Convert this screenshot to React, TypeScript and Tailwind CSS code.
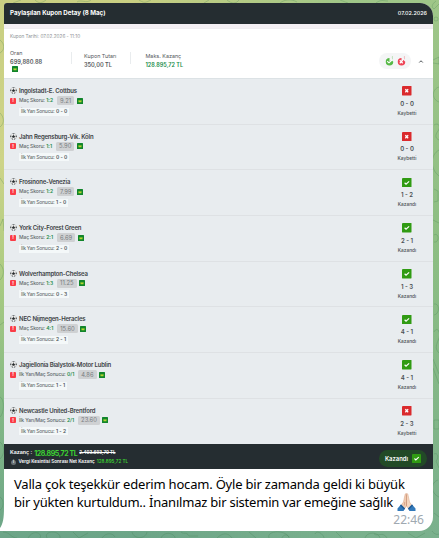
type Match = {
  teams: string;
  market: string;
  pick: string;
  odds: string;
  half: string;
  score: string;
  won: boolean;
};

const matches: Match[] = [
  { teams: "Ingolstadt-E. Cottbus", market: "Maç Skoru:", pick: "1:2", odds: "9.21", half: "0 - 0", score: "0 - 0", won: false },
  { teams: "Jahn Regensburg-Vik. Köln", market: "Maç Skoru:", pick: "1:1", odds: "5.90", half: "0 - 0", score: "0 - 0", won: false },
  { teams: "Frosinone-Venezia", market: "Maç Skoru:", pick: "1:2", odds: "7.99", half: "1 - 0", score: "1 - 2", won: true },
  { teams: "York City-Forest Green", market: "Maç Skoru:", pick: "2:1", odds: "6.69", half: "2 - 0", score: "2 - 1", won: true },
  { teams: "Wolverhampton-Chelsea", market: "Maç Skoru:", pick: "1:3", odds: "11.25", half: "0 - 3", score: "1 - 3", won: true },
  { teams: "NEC Nijmegen-Heracles", market: "Maç Skoru:", pick: "4:1", odds: "15.60", half: "2 - 1", score: "4 - 1", won: true },
  { teams: "Jagiellonia Bialystok-Motor Lublin", market: "İlk Yarı/Maç Sonucu:", pick: "0/1", odds: "4.86", half: "1 - 1", score: "4 - 1", won: true },
  { teams: "Newcastle United-Brentford", market: "İlk Yarı/Maç Sonucu:", pick: "2/1", odds: "23.60", half: "1 - 2", score: "2 - 3", won: false },
];

function Wallpaper() {
  return (
    <svg className="absolute inset-0 h-full w-full" viewBox="0 0 439 538" preserveAspectRatio="none">
      <defs>
        <linearGradient id="left" x1="0" y1="0" x2="0" y2="1">
          <stop offset="0" stopColor="#c9cf82" />
          <stop offset="0.3" stopColor="#ced488" />
          <stop offset="0.52" stopColor="#aacb82" />
          <stop offset="0.75" stopColor="#84b985" />
          <stop offset="1" stopColor="#6ca588" />
        </linearGradient>
        <linearGradient id="right" x1="0" y1="0" x2="0" y2="1">
          <stop offset="0" stopColor="#9fc688" />
          <stop offset="0.5" stopColor="#8bbd83" />
          <stop offset="1" stopColor="#7ab08d" />
        </linearGradient>
        <linearGradient id="fade" x1="0" y1="0" x2="1" y2="0">
          <stop offset="0.3" stopColor="#fff" stopOpacity="0" />
          <stop offset="0.8" stopColor="#fff" />
        </linearGradient>
        <mask id="mask">
          <rect width="439" height="538" fill="url(#fade)" />
        </mask>
      </defs>
      <rect width="439" height="538" fill="url(#left)" />
      <rect width="439" height="538" fill="url(#right)" mask="url(#mask)" />
      <g fill="none" stroke="#3f7d50" strokeOpacity="0.32" strokeWidth="0.8">
        <path d="M436 1c-4 3-5 6-2 8l5-5M434 19a2 2 0 1 0 4 0a2 2 0 1 0-4 0M433 60l6-3v7l-6-1M439 87c-7 2-8 12 0 15M434 125c5-3 7 2 4 6s-3 7 1 9M439 150c-9 5-9 19 0 26M434 189l4 2v10l-4 1M433 220l6 3M434 235c5-3 6 8 0 7M434 304c6-1 6 10 0 11M434 332c3-6 7 0 5 6s-5 10 0 15M433 359l6 15M433 368l6 16M434 420h5v9h-5z" />
        <path d="M434 454c4-2 5 4 2 7l3 7M438 480c-7 2-8 13 1 17M434 513l5 4M0 40c5 4 5 10 0 13M0 113c4 4 5 10 0 14M0 178l4 6M0 226l3-7 1 12M0 264c5 5 4 12 0 16M0 325l4-3M0 397c5 2 4 17 0 20M0 442c5 4 5 12 0 17M0 497c5 3 3 12 0 13" />
        <path d="M3 532c7 0 8 6 14 6M28 538c5-9 15-5 12 0M47 538c-4-8 14-8 13 0M73 532l6 6 9-5M102 538c4-6 11-5 13-1M132 532c2 8 14 7 15 0M161 538c4-8 14-4 14 0M181 532c4 3 5-1 8 4h9M217 538c5-5 11-6 15 0M249 532l7 6M269 538c-3-7 15-9 20-1M282 538c1-4 7-4 7 0M315 534c2-5 9 1 9 4M336 532l6 6M365 538c2-7 14-6 15 0M374 534c4 3 9-3 13 4M408 533l8 5 9-5M432 531c2 3 5 4 7 3" />
        <path d="M13 3l8-3M35 0c4 4 7 3 11 0M77 2c4-3 9 2 14-2M139 0c5 3 6 3 12 0M204 3l5-3M227 0c5 4 9 4 12 0M280 3c5-4 12-4 17-1M340 0l8 3M376 3c5-4 8-2 12-2" />
      </g>
      {/* bubble tail */}
      <path d="M4 508c0 10-1 16-4 20v3h8v-23z" fill="#fff" />
    </svg>
  );
}

function Football() {
  return (
    <svg className="h-[7px] w-[7px] shrink-0" viewBox="0 0 14 14">
      <circle cx="7" cy="7" r="6.2" fill="#f5f5f5" stroke="#9ba0a3" strokeWidth="0.7" />
      <path d="M7 4.2l3 2.2-1.1 3.3H5.1L4 6.4zM4.5 1h5L7 3zM.8 4.8l2.3.8-.8 3L.7 7.8zM13.2 4.8l-2.3.8.8 3 1.6-.8zM2.6 11.5l2.7-.4 1 2.2zM11.4 11.5l-2.7-.4-1 2.2z" fill="#25292b" />
    </svg>
  );
}

function Badge() {
  return (
    <svg className="h-[6px] w-[6px] shrink-0" viewBox="0 0 12 12">
      <rect width="12" height="12" rx="1" fill="#11852b" />
      <path d="M3 4l1.7 1.5L6 3.5l1.3 2L9 4v4.5H3z" fill="#b5d532" />
    </svg>
  );
}

function ResultIcon({ won, className }: { won: boolean; className: string }) {
  return (
    <svg className={className} viewBox="0 0 20 20">
      <rect width="20" height="20" rx="1" fill={won ? "#309b13" : "#da2a2d"} />
      <path
        d={won ? "M5.5 10l3 3 6.5-6" : "M7 7l6 6M13 7l-6 6"}
        fill="none"
        stroke="#fff"
        strokeWidth={won ? 2.5 : 2.8}
      />
    </svg>
  );
}

function StatusIcon({ won }: { won: boolean }) {
  const color = won ? "#57b947" : "#ee4355";
  return (
    <svg className="h-[10px] w-[9px]" viewBox="0 0 18 20">
      <path d="M9 4a7.5 7.5 0 1 0 7.5 7.5L13 8l-4 3z" fill={color} />
      <path d={won ? "M4.5 10.5l3.5 3.2L14 8" : "M5.5 8.5l6 6M11.5 8.5l-6 6"} fill="none" stroke="#fff" strokeWidth="2.2" />
      <path d="M13.5 2l1.5-1v5.5" fill="none" stroke={color} strokeWidth="1" strokeOpacity="0.6" />
    </svg>
  );
}

function PrayingHands() {
  return (
    <svg className="h-[18px] w-[19px] shrink-0" viewBox="0 0 38 36">
      <path d="M18.6 1c-2 .1-2.5 1.5-2.9 4L13 18l-5 7 6 8 5-7z" fill="#f4cfb4" stroke="#d7a183" strokeWidth="1" />
      <path d="M19.4 1c2 .1 2.5 1.5 2.9 4L25 18l5 7-6 8-5-7z" fill="#f7d9c1" stroke="#d7a183" strokeWidth="1" />
      <path d="M19 3v23M15.5 18l-1 7" fill="none" stroke="#bf8267" strokeWidth="1" />
      <path d="M8 23l8 8-3 5H1v-5zM30 23l-8 8 3 5h12v-5z" fill="#3279ba" />
      <path d="M8 23l8 8-2 2-8-8zM30 23l-8 8 2 2 8-8z" fill="#205b94" />
    </svg>
  );
}

function MatchRow({ match }: { match: Match }) {
  return (
    <div className="flex h-[45.7px] justify-between border-b border-[#dee1e4] pl-[6px] pr-[10px]">
      <div className="pt-[7px]">
        <div className="flex h-[9px] items-center gap-[2px] text-[6px] font-semibold tracking-[-0.18px] text-[#3c4245]">
          <Football />
          <span className="pt-px">{match.teams}</span>
        </div>
        <div className="mt-[0.5px] flex h-[10px] items-center">
          <span className="flex h-[6px] w-[6px] items-center justify-center rounded-[1px] bg-[#fa3c47] text-[5px] font-bold text-white">!</span>
          <span className="ml-[3px] text-[5px] font-medium tracking-[-0.13px] text-[#61676b]">{match.market}</span>
          <span className="ml-[1.5px] text-[5px] font-semibold text-[#248c4d]">{match.pick}</span>
          <span className="ml-[4px] mr-[2.5px] flex h-[9px] items-center rounded-[1.5px] bg-[#cfd1d3] px-[3px] text-[5.8px] text-[#777b7e]">{match.odds}</span>
          <Badge />
        </div>
        <div className="ml-[9px] mt-[2px] flex h-[8px] w-fit items-center bg-[#f4f8f9] px-[2px] text-[5px] font-medium text-[#697074]">
          <span className="tracking-[-0.22px]">İlk Yarı Sonucu:</span>
          <span className="ml-[1.5px] font-semibold text-[#53595d]">{match.half}</span>
        </div>
      </div>
      <div className="flex w-[32px] flex-col items-center pt-[7.3px] text-[#4a5053]">
        <ResultIcon won={match.won} className="h-[9.5px] w-[9.5px] shrink-0" />
        <span className="mt-[4px] h-[7px] text-[6px] font-semibold leading-[7px]">{match.score}</span>
        <span className="mt-[3px] text-[4.8px] font-medium leading-[7px]">{match.won ? "Kazandı" : "Kaybetti"}</span>
      </div>
    </div>
  );
}

export default function App() {
  return (
    <div className="relative h-[538px] w-[439px] overflow-hidden pl-[4px] pr-[6px] pt-[3px] font-[Inter,sans-serif] leading-none">
      <Wallpaper />
      <main className="relative h-[528px] overflow-hidden rounded-tl-[3px] rounded-tr-[13px] rounded-br-[14px] bg-white">
        <header className="flex h-[21px] items-center justify-between bg-[#252d31] pl-[6px] pr-[6px] text-white">
          <h1 className="text-[6.2px] font-bold">Paylaşılan Kupon Detay (8 Maç)</h1>
          <span className="text-[5.4px] font-medium">07.02.2026</span>
        </header>
        <div className="h-[4px] bg-[#f3eff3]" />
        <section className="h-[50px] border-t border-[#efedf0] bg-white pl-[6px] pr-[9px]">
          <p className="pt-[4px] text-[4.7px] leading-[7px] text-[#8c9093]">Kupon Tarihi: 07.02.2026 - 11:10</p>
          <div className="mt-[10px] flex">
            <div className="w-[61px] text-[#54585b]">
              <p className="text-[5.4px] leading-[7px]">Oran</p>
              <p className="mt-px text-[5.7px] font-semibold leading-[7px]">699,880.88</p>
              <div className="pl-[2px] pt-[0.5px]"><Badge /></div>
            </div>
            <div className="mt-[2px] h-[12px] w-px bg-[#e9ecee]" />
            <div className="ml-[12px] mt-[3px] w-[46px] text-[#54585b]">
              <p className="text-[5.4px] leading-[7px]">Kupon Tutarı</p>
              <p className="mt-[2px] text-[5.6px] font-semibold leading-[7px]">350,00 TL</p>
            </div>
            <div className="mt-[2px] h-[12px] w-px bg-[#e9ecee]" />
            <div className="ml-[14.5px] mt-[3px] text-[#54585b]">
              <p className="text-[5.4px] leading-[7px]">Maks. Kazanç</p>
              <p className="mt-[2px] text-[5.5px] font-semibold leading-[7px] text-[#168b48]">128.895,72 TL</p>
            </div>
            <div className="ml-auto mt-[3px] flex h-[16px] items-center">
              <div className="flex h-[16px] w-[32px] items-center justify-center gap-[3px] rounded-full bg-[#f4f5f6]">
                <StatusIcon won />
                <StatusIcon won={false} />
              </div>
              <svg className="ml-[7px] h-[5px] w-[6px]" viewBox="0 0 12 10">
                <path d="M2.5 7L6 3.5 9.5 7" fill="none" stroke="#4b5054" strokeWidth="2" />
              </svg>
            </div>
          </div>
        </section>
        <section className="h-[366px] overflow-hidden border-t border-[#dce2e5] bg-[#e8ecef]">
          {matches.map((match) => (
            <MatchRow key={match.teams} match={match} />
          ))}
        </section>
        <footer className="flex h-[25px] items-center justify-between bg-[#252d31] pl-[6px] pr-[3px] text-white">
          <div className="pt-[2px]">
            <p className="flex h-[9px] items-center gap-[2px] text-[5.3px] font-semibold">
              <span>Kazanç :</span>
              <span className="text-[7px] font-bold tracking-[-0.4px] text-[#3cd332]">128.895,72 TL</span>
              <span className="text-[4.5px] line-through">2.403.693,70 TL</span>
            </p>
            <p className="flex h-[9px] items-center text-[4.6px] font-semibold">
              <span className="ml-px mr-[2.5px] flex h-[5px] w-[5px] items-center justify-center rounded-full bg-[#697176] text-[4px]">i</span>
              <span>Vergi Kesintisi Sonrası Net Kazanç</span>
              <span className="ml-[2px] text-[#3cd332]">128.895,72 TL</span>
            </p>
          </div>
          <div className="mr-[3px] mt-[4px] flex h-[17px] w-[48px] items-center justify-center gap-[4px] rounded-full bg-[#224a27] text-[5.9px] font-semibold">
            Kazandı
            <ResultIcon won className="h-[9px] w-[9px]" />
          </div>
        </footer>
        <section className="h-[61px] px-[10px] pt-[6px] font-['Noto_Sans',sans-serif] text-[13px] leading-[18px] text-black">
          <p className="whitespace-nowrap tracking-[-0.2px]">Valla çok teşekkür ederim hocam. Öyle bir zamanda geldi ki büyük</p>
          <p className="flex items-center gap-[4px] whitespace-nowrap tracking-[-0.22px]">
            bir yükten kurtuldum.. İnanılmaz bir sistemin var emeğine sağlık
            <PrayingHands />
          </p>
          <p className="-mr-px text-right text-[12px] leading-[18px] text-[#a0a9b1]">22:46</p>
        </section>
      </main>
    </div>
  );
}
